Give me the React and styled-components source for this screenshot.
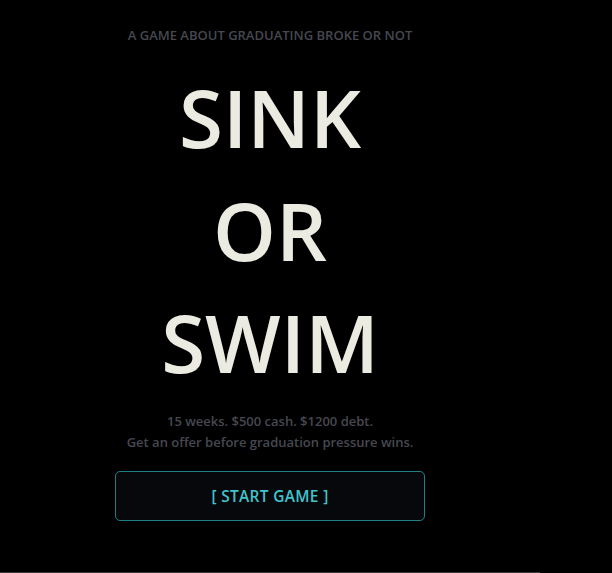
import styled, { createGlobalStyle } from 'styled-components'

const GlobalStyle = createGlobalStyle`
    html, body {
        margin: 0;
        padding: 0;
        background: #000;
    }
    body {
        font-family: "Open Sans", "Noto Sans", sans-serif;
    }
`

const Screen = styled.div`
    box-sizing: border-box;
    height: 573px;
    width: 540px;
    display: flex;
    flex-direction: column;
    align-items: center;
    padding-top: 26px;
    border-bottom: 1px solid #3a3a3a;
`

const Tagline = styled.p`
    margin: 0;
    font-size: 13px;
    font-weight: 600;
    color: #464851;
    text-transform: uppercase;
`

const Title = styled.h1`
    margin: 17px 0 0;
    font-size: 80px;
    font-weight: 600;
    line-height: 112.5px;
    color: #ecebe1;
    text-align: center;
`

const Blurb = styled.p`
    margin: 12px 0 0;
    font-size: 13px;
    font-weight: 600;
    line-height: 21px;
    color: #464851;
    text-align: center;
`

const Button = styled.button`
    box-sizing: border-box;
    margin-top: 18px;
    width: 310px;
    height: 50px;
    background: #07080b;
    border: 1px solid #1f7f87;
    border-radius: 5px;
    color: #3fc4cd;
    font-family: inherit;
    font-size: 15.5px;
    font-weight: 600;
    letter-spacing: 0.3px;

    &:hover {
        cursor: pointer;
    }
`

const App = () => {
    return (
        <>
            <GlobalStyle />
            <Screen>
                <Tagline>A game about graduating broke or not</Tagline>
                <Title>
                    SINK<br />OR<br />SWIM
                </Title>
                <Blurb>
                    15 weeks. $500 cash. $1200 debt.<br />
                    Get an offer before graduation pressure wins.
                </Blurb>
                <Button>[ START GAME ]</Button>
            </Screen>
        </>
    )
}

export default App
